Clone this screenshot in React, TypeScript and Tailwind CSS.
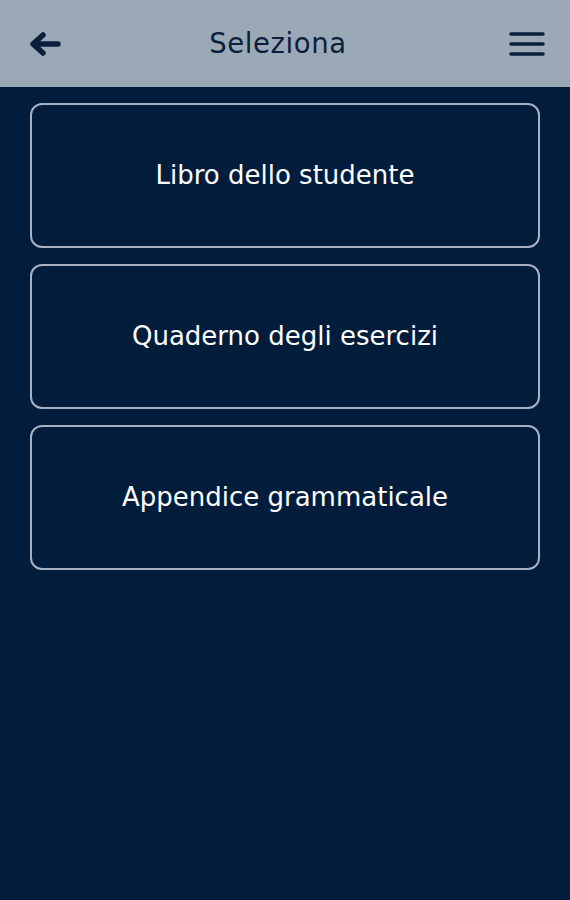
export default function App() {
  const items = ["Libro dello studente", "Quaderno degli esercizi", "Appendice grammaticale"]

  return (
    <div className="flex min-h-[900px] flex-col bg-[#021d3c] font-['DejaVu_Sans',sans-serif]">
      <div className="flex h-[87px] items-center justify-between bg-[#9ba8b5] px-[28px]">
        <svg width="34" height="26" viewBox="0 0 34 26" className="text-[#0b1f3c]">
          <path d="M30 13H8M15 4L5 13l10 9" fill="none" stroke="currentColor" strokeWidth="5.5" strokeLinecap="round" strokeLinejoin="round" />
        </svg>
        <div className="mr-[14px] text-[27.5px] tracking-[0.6px] text-[#0b1f3c]">Seleziona</div>
        <svg width="38" height="26" viewBox="0 0 38 26" className="mr-[-4px] text-[#0b1f3c]">
          <path d="M3 3h32M3 13h32M3 23h32" fill="none" stroke="currentColor" strokeWidth="3.5" strokeLinecap="round" />
        </svg>
      </div>
      <div className="flex flex-col gap-[16px] px-[30px] pt-[16px]">
        {items.map((t) => (
          <div
            key={t}
            className="flex h-[145px] items-center justify-center rounded-[12px] border-2 border-[#a7b1c4] text-[26px] text-white"
          >
            {t}
          </div>
        ))}
      </div>
    </div>
  )
}
